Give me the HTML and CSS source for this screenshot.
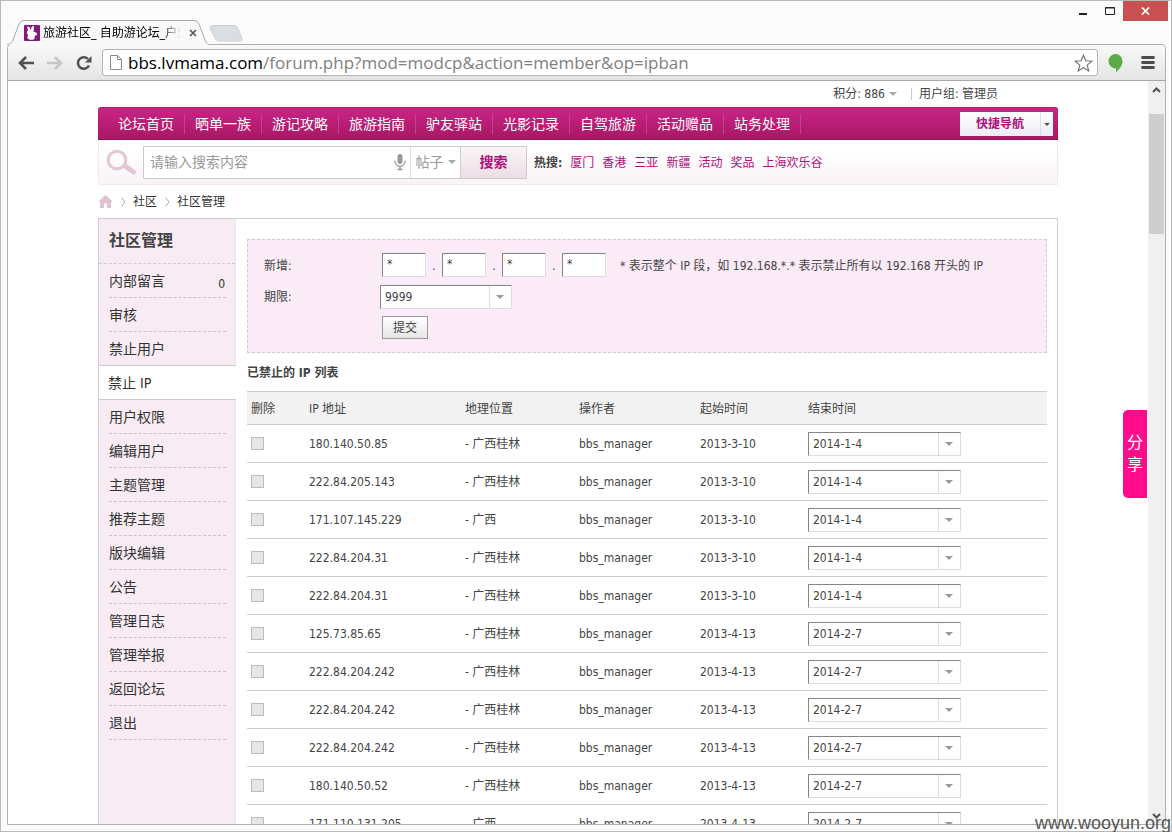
FILE: index.html
```html
<!DOCTYPE html>
<html lang="zh-cn">

<head>
    <meta charset="UTF-8">
    <meta name="viewport" content="width=device-width, initial-scale=1.0">
    <title>旅游社区_ 自助游论坛_户外</title>
    <link rel="stylesheet" href="styles.css">
</head>

<body>
    <div class="window">
        <!-- 标题栏 -->
        <div class="titlebar">
            <div class="tab">
                <svg class="tab-bg" width="202" height="25" viewBox="0 0 202 25">
                    <path d="M0 24.5 C5 24 5 22 6 20 L12 4 Q13.5 .5 17 .5 H187 Q190.500 .5 192 4 L198 20 Q199.500 24.500 202 24.500" fill="#f9f9f9" stroke="#a9a9a9" />
                    <path d="M2 25h199" stroke="#f9f9f9" stroke-width="2" />
                </svg>
                <svg class="favicon" width="16" height="16" viewBox="0 0 16 16">
                    <rect width="16" height="16" rx="1" fill="#86177c" />
                    <path d="M4 1.500c1.500 0 2.500 2 3 4.500C7 3.500 7.500 1 9 1c1.500 0 1 3 .5 5.500 1 1 3 .5 3.500 2 .4 1.500-1 1.500-2 2.500s.5 3-1.500 3.500c-2 .5-5 .5-6-1.500-.7-1.500 1-2 .5-3S2.500 8 3 6.500c.5-1 1.500 0 1.500 0C4 5 2.500 1.500 4 1.500z" fill="#fff" />
                </svg>
                <span class="tab-title">旅游社区_ 自助游论坛_户外</span>
                <svg class="tab-close" width="8" height="8" viewBox="0 0 8 8"><path d="M1 1l6 6M7 1L1 7" stroke="#555" stroke-width="1.600" /></svg>
            </div>
            <svg class="newtab" width="34" height="17" viewBox="0 0 34 17"><path d="M3 .5h22q3 0 4 3l4 10q.5 2.500-2 2.500H10q-3 0-4-3L1 3Q.5.5 3 .5z" fill="#d9dee5" stroke="#cdd1d6" /></svg>
            <div class="win-btns">
                <svg width="50" height="20" viewBox="0 0 50 20">
                    <path d="M6 13h8" stroke="#222" stroke-width="2" />
                    <path d="M32.500 6.500h9v7h-9z M32 7h10" fill="none" stroke="#222" />
                </svg>
                <button class="close" aria-label="关闭"><svg width="9" height="8" viewBox="0 0 9 8"><path d="M1 .5l7 7M8 .5l-7 7" stroke="#fff" stroke-width="1.700" /></svg></button>
            </div>
        </div>

        <div class="frame">
            <!-- 地址栏 -->
            <div class="toolbar">
                <svg width="16" height="14" viewBox="0 0 16 14"><path d="M8 1L2 7l6 6M2 7h14" fill="none" stroke="#505050" stroke-width="2.500" /></svg>
                <svg width="16" height="14" viewBox="0 0 16 14"><path d="M8 1l6 6-6 6M14 7H0" fill="none" stroke="#c6c6c6" stroke-width="2.500" /></svg>
                <svg width="16" height="16" viewBox="0 0 16 16"><path d="M13 10.500A5.800 5.800 0 1 1 12 4" fill="none" stroke="#505050" stroke-width="2.500" /><path d="M15.500 1v6.500H9z" fill="#505050" /></svg>
                <div class="omnibox">
                    <svg width="12" height="15" viewBox="0 0 12 15"><path d="M.5.5h7l4 4v10H.5z M7.500.5v4h4" fill="#fff" stroke="#8a8a8a" /></svg>
                    <span class="url"><b>bbs.lvmama.com</b>/forum.php?mod=modcp&amp;action=member&amp;op=ipban</span>
                    <svg width="19" height="18" viewBox="0 0 19 18"><path d="M9.500 1.200l2.300 5.600 6 .4-4.600 3.900 1.500 5.800-5.200-3.200-5.200 3.200 1.500-5.800L1.200 7.200l6-.4z" fill="#fff" stroke="#777" stroke-width="1.200" /></svg>
                </div>
                <svg width="15" height="18" viewBox="0 0 15 18"><path d="M7.500 0a7 7 0 0 1 7 7.300c0 4-3 8-6.500 10.700v-3.600A7 7 0 1 1 7.500 0z" fill="#5aaa46" /></svg>
                <svg class="menu" width="14" height="13" viewBox="0 0 14 13"><path d="M1.500 1.500h11M1.500 6.500h11M1.500 11.500h11" stroke="#4c4c4c" stroke-width="2.800" stroke-linecap="round" /></svg>
            </div>

            <div class="viewport">
                <div class="page">
                    <div class="wp">
                        <div class="userbar">
                            <a href="#">积分: 886<i class="arrow"></i></a>
                            <a href="#" class="group">用户组: 管理员</a>
                        </div>

                        <div class="nav">
                            <ul>
                                <li><a href="#">论坛首页</a></li>
                                <li><a href="#">晒单一族</a></li>
                                <li><a href="#">游记攻略</a></li>
                                <li><a href="#">旅游指南</a></li>
                                <li><a href="#">驴友驿站</a></li>
                                <li><a href="#">光影记录</a></li>
                                <li><a href="#">自驾旅游</a></li>
                                <li><a href="#">活动赠品</a></li>
                                <li><a href="#">站务处理</a></li>
                            </ul>
                            <button class="quick"><span>快捷导航</span><i class="arrow"></i></button>
                        </div>

                        <form class="search">
                            <svg width="30" height="26" viewBox="0 0 30 26"><circle cx="10" cy="11" r="8.800" fill="none" stroke="#e3c6d4" stroke-width="3" /><path d="M18 17l8.500 6" stroke="#e3c6d4" stroke-width="5" stroke-linecap="round" /></svg>
                            <div class="search-box">
                                <input type="text" placeholder="请输入搜索内容" aria-label="搜索内容">
                                <svg width="12" height="17" viewBox="0 0 12 17"><rect x="3.500" y="0" width="5" height="10" rx="2.500" fill="#999" /><path d="M1 6.500c0 7.500 10 7.500 10 0M6 12v3M3.500 15.500h5" fill="none" stroke="#999" stroke-width="1.300" /></svg>
                                <button type="button" class="type">帖子<i class="arrow"></i></button>
                                <button type="button" class="go">搜索</button>
                            </div>
                            <div class="hot">
                                <strong>热搜:</strong>
                                <a href="#">厦门</a><a href="#">香港</a><a href="#">三亚</a><a href="#">新疆</a><a href="#">活动</a><a href="#">奖品</a><a href="#">上海欢乐谷</a>
                            </div>
                        </form>

                        <div class="crumb">
                            <svg width="15" height="13" viewBox="0 0 15 13"><path d="M7.500 0L15 6.800h-2V13H9V8.500H6V13H2V6.800H0z" fill="#e0c3d3" /></svg>
                            <svg width="5" height="10" viewBox="0 0 5 10"><path d="M.5.5L4 5 .5 9.500" fill="none" stroke="#aaa" /></svg>
                            <a href="#">社区</a>
                            <svg width="5" height="10" viewBox="0 0 5 10"><path d="M.5.5L4 5 .5 9.500" fill="none" stroke="#aaa" /></svg>
                            <a href="#">社区管理</a>
                        </div>

                        <div class="main">
                            <div class="side">
                                <h2>社区管理</h2>
                                <ul>
                                    <li><a href="#">内部留言</a><em>0</em></li>
                                    <li><a href="#">审核</a></li>
                                    <li><a href="#">禁止用户</a></li>
                                    <li class="active"><a href="#">禁止 IP</a></li>
                                    <li><a href="#">用户权限</a></li>
                                    <li><a href="#">编辑用户</a></li>
                                    <li><a href="#">主题管理</a></li>
                                    <li><a href="#">推荐主题</a></li>
                                    <li><a href="#">版块编辑</a></li>
                                    <li><a href="#">公告</a></li>
                                    <li><a href="#">管理日志</a></li>
                                    <li><a href="#">管理举报</a></li>
                                    <li><a href="#">返回论坛</a></li>
                                    <li><a href="#">退出</a></li>
                                </ul>
                            </div>

                            <div class="content">
                                <form class="ban">
                                    <div class="row">
                                        <label for="ip1">新增:</label>
                                        <div class="ips">
                                            <input type="text" id="ip1" value="*"><span>.</span>
                                            <input type="text" aria-label="IP 2" value="*"><span>.</span>
                                            <input type="text" aria-label="IP 3" value="*"><span>.</span>
                                            <input type="text" aria-label="IP 4" value="*">
                                        </div>
                                        <p>* 表示整个 IP 段，如 192.168.*.* 表示禁止所有以 192.168 开头的 IP</p>
                                    </div>
                                    <div class="row">
                                        <label for="term">期限:</label>
                                        <span class="select term"><select id="term"><option>9999</option></select></span>
                                    </div>
                                    <div class="row">
                                        <button type="button" class="submit">提交</button>
                                    </div>
                                </form>

                                <h3>已禁止的 IP 列表</h3>
                                <table>
                                    <thead>
                                        <tr>
                                            <th class="c-del">删除</th>
                                            <th class="c-ip">IP 地址</th>
                                            <th class="c-geo">地理位置</th>
                                            <th class="c-op">操作者</th>
                                            <th class="c-start">起始时间</th>
                                            <th>结束时间</th>
                                        </tr>
                                    </thead>
                                    <tbody id="list"></tbody>
                                </table>
                            </div>
                        </div>
                    </div>
                    <a href="#" class="share">分<br>享</a>
                </div>

                <div class="scrollbar">
                    <svg width="9" height="6" viewBox="0 0 9 6"><path d="M1 5l3.500-3.500L8 5" fill="none" stroke="#505050" stroke-width="2" /></svg>
                    <div class="track"><div class="thumb"></div></div>
                    <svg width="9" height="6" viewBox="0 0 9 6"><path d="M1 1l3.500 3.500L8 1" fill="none" stroke="#505050" stroke-width="2" /></svg>
                </div>
            </div>
        </div>
        <div class="mark">www.wooyun.org</div>
    </div>
    <script>
        var list = document.querySelector('#list')
        // IP, 地理位置, 起始时间, 结束时间
        var data = [
            ['180.140.50.85', '广西桂林', '2013-3-10', '2014-1-4'],
            ['222.84.205.143', '广西桂林', '2013-3-10', '2014-1-4'],
            ['171.107.145.229', '广西', '2013-3-10', '2014-1-4'],
            ['222.84.204.31', '广西桂林', '2013-3-10', '2014-1-4'],
            ['222.84.204.31', '广西桂林', '2013-3-10', '2014-1-4'],
            ['125.73.85.65', '广西桂林', '2013-4-13', '2014-2-7'],
            ['222.84.204.242', '广西桂林', '2013-4-13', '2014-2-7'],
            ['222.84.204.242', '广西桂林', '2013-4-13', '2014-2-7'],
            ['222.84.204.242', '广西桂林', '2013-4-13', '2014-2-7'],
            ['180.140.50.52', '广西桂林', '2013-4-13', '2014-2-7'],
            ['171.110.131.205', '广西', '2013-4-13', '2014-2-7']
        ]
        var html = ''
        for (var i = 0; i < data.length; i++) {
            html += '<tr>' +
                '<td><input type="checkbox" disabled aria-label="删除 ' + data[i][0] + '"></td>' +
                '<td>' + data[i][0] + '</td>' +
                '<td>- ' + data[i][1] + '</td>' +
                '<td>bbs_manager</td>' +
                '<td>' + data[i][2] + '</td>' +
                '<td><span class="select"><select aria-label="结束时间"><option>' + data[i][3] + '</option></select></span></td>' +
                '</tr>'
        }
        list.innerHTML = html
    </script>
</body>

</html>
```
FILE: styles.css
```css
* {
    list-style: none;
    margin: 0;
    padding: 0;
    box-sizing: border-box;
}

body {
    overflow: hidden;
    font: 12px/18px "DejaVu Sans Condensed", "Noto Sans CJK SC", sans-serif;
    color: #444;
}

a {
    color: inherit;
    text-decoration: none;
}

button,
input,
select {
    font: inherit;
    color: inherit;
    border-radius: 0;
}

svg {
    display: block;
    flex: none;
}

.arrow {
    display: inline-block;
    border: 4px solid transparent;
    border-top-color: #aaa;
    border-bottom: 0;
}

/* 浏览器窗口 */
.window {
    position: relative;
    display: flex;
    flex-direction: column;
    height: 100vh;
    padding: 0 5px 6px 6px;
    border: 1px solid #b9b9b9;
    background-color: #fbfbfb;
}

.titlebar {
    display: flex;
    height: 43px;
}

.tab {
    position: relative;
    display: flex;
    align-items: center;
    width: 202px;
    height: 25px;
    margin-top: 19px;
    padding-left: 17px;
    z-index: 1;
}

.tab-bg {
    position: absolute;
    left: 0;
    top: 0;
}

.favicon,
.tab-close {
    position: relative;
}

.tab-title {
    position: relative;
    width: 138px;
    margin: 0 8px 0 3px;
    overflow: hidden;
    white-space: nowrap;
    color: #000;
    -webkit-mask-image: linear-gradient(to right, #000 120px, transparent 138px);
    mask-image: linear-gradient(to right, #000 120px, transparent 138px);
}

.newtab {
    margin-top: 24px;
}

.win-btns {
    display: flex;
    margin-left: auto;
    margin-right: -2px;
}

.close {
    display: flex;
    align-items: center;
    justify-content: center;
    width: 45px;
    height: 20px;
    border: 0;
    background-color: #c75050;
}

.frame {
    flex: 1;
    display: flex;
    flex-direction: column;
    min-height: 0;
    border: 1px solid #b0b0b0;
    border-radius: 4px 4px 0 0;
    background-color: #fff;
}

.toolbar {
    display: flex;
    align-items: center;
    gap: 13px;
    height: 36px;
    padding: 0 10px;
    border-bottom: 1px solid #a8a8a8;
    border-radius: 4px 4px 0 0;
    background-image: linear-gradient(#f9f9f9, #e4e4e4);
}

.omnibox {
    flex: 1;
    display: flex;
    align-items: center;
    height: 27px;
    margin: 0 -3px;
    padding: 0 4px 0 7px;
    border: 1px solid #b3b3b3;
    border-radius: 3px;
    background-color: #fff;
}

.url {
    flex: 1;
    margin-left: 6px;
    font: 17px/24px "Open Sans", sans-serif;
    color: #808080;
}

.url b {
    font-weight: normal;
    color: #000;
}

.menu {
    margin-left: 5px;
}

.viewport {
    flex: 1;
    display: flex;
    min-height: 0;
}

.page {
    position: relative;
    flex: 1;
    overflow: hidden;
}

.scrollbar {
    display: flex;
    flex-direction: column;
    align-items: center;
    width: 17px;
    padding: 6px 0 5px;
    background-color: #f0f0f0;
}

.track {
    flex: 1;
    width: 15px;
    padding-top: 21px;
}

.thumb {
    height: 120px;
    background-color: #cdcdcd;
}

.share {
    position: absolute;
    right: 1px;
    top: 329px;
    width: 24px;
    height: 88px;
    padding-top: 22px;
    border-radius: 5px 0 0 5px;
    background-color: #ff0b8c;
    color: #fff;
    font-size: 16px;
    line-height: 22px;
    text-align: center;
}

/* 论坛页面 */
.wp {
    width: 960px;
    margin: 0 auto;
}

.userbar {
    display: flex;
    justify-content: flex-end;
    height: 26px;
    padding-right: 60px;
    line-height: 26px;
}

.userbar .arrow {
    margin: 0 14px 2px 4px;
}

.userbar .group {
    padding-left: 8px;
    background: linear-gradient(#ccc, #ccc) no-repeat 0 7px / 1px 12px;
}

.nav {
    display: flex;
    justify-content: space-between;
    height: 33px;
    padding: 0 5px 0 10px;
    border-top: 1px solid #a81c6c;
    border-bottom: 1px solid #8e1458;
    border-radius: 3px 3px 0 0;
    background-image: linear-gradient(#c92486, #a91864);
}

.nav ul {
    display: flex;
    align-items: center;
}

.nav li {
    padding: 0 10px;
    border-right: 1px solid #c1458c;
    color: #fff;
    font-size: 14px;
    line-height: 20px;
}

.quick {
    display: flex;
    align-items: center;
    height: 24px;
    margin-top: 4px;
    border: 0;
    background-image: linear-gradient(#fff, #ecebf5);
    color: #b0107a;
    font-weight: bold;
    line-height: 24px;
}

.quick span {
    width: 81px;
    border-right: 1px solid #ddd;
}

.quick .arrow {
    margin: 0 3px;
    border-width: 3px;
    border-bottom: 0;
    border-top-color: #555;
}

.search {
    display: flex;
    align-items: center;
    height: 45px;
    padding-left: 8px;
    border: 1px solid #f4e8ef;
    border-top: 0;
    background-image: linear-gradient(#fff 20%, #faf3f7);
}

.search-box {
    display: flex;
    align-items: center;
    width: 384px;
    height: 33px;
    margin: 0 7px 0 6px;
    border: 1px solid #ccc;
    background-color: #fff;
    font-size: 14px;
}

.search-box input {
    flex: 1;
    min-width: 0;
    padding-left: 6px;
    border: 0;
    outline: none;
}

.search-box input::placeholder {
    color: #999;
}

.type {
    width: 50px;
    height: 31px;
    margin-left: 4px;
    border: 0;
    border-left: 1px solid #ddd;
    background-color: #fff;
    color: #999;
}

.type .arrow {
    margin: 0 0 3px 4px;
}

.go {
    width: 66px;
    height: 31px;
    border: 0;
    border-left: 1px solid #ccc;
    background-image: linear-gradient(#fbf5f8, #ecdde5);
    color: #b0107a;
    font-weight: bold;
}

.hot {
    display: flex;
    gap: 8px;
    padding-top: 2px;
    color: #b0107a;
}

.hot strong {
    color: #444;
}

.crumb {
    display: flex;
    align-items: center;
    height: 33px;
    color: #333;
}

.crumb svg + svg,
.crumb a + svg {
    margin: 0 7px 0 8px;
}

.main {
    display: flex;
    border: 1px solid #cdcdcd;
}

.side {
    width: 137px;
    background-color: #f8ebf3;
    border-right: 1px solid #f2e4ec;
}

.side h2 {
    height: 45px;
    padding-left: 10px;
    border-bottom: 1px dashed #cdcdcd;
    font-size: 16px;
    line-height: 44px;
}

.side li {
    display: flex;
    justify-content: space-between;
    height: 34px;
    margin: 0 9px 0 10px;
    border-bottom: 1px dashed #cdbfc8;
    color: #333;
    font-size: 14px;
    line-height: 34px;
}

.side li em {
    padding: 3px 1px 0 0;
    font-size: 12px;
    font-style: normal;
}

.side li.active {
    height: 35px;
    margin: -1px -1px 0 0;
    padding-left: 9px;
    border-top: 1px solid #cdcdcd;
    border-bottom: 1px solid #cdcdcd;
    background-color: #fff;
}

.content {
    flex: 1;
    padding: 20px 10px 0 11px;
}

.ban {
    padding: 10px 16px 9px;
    border: 1px dashed #cdcdcd;
    background-color: #faebf7;
}

.row {
    display: flex;
    align-items: center;
    height: 31px;
}

.row label {
    width: 116px;
}

.ips {
    display: flex;
    margin: 0 14px 0 2px;
}

.ips input {
    width: 44px;
    height: 24px;
    padding: 0 4px 2px;
}

.ips span {
    width: 16px;
    line-height: 26px;
    text-align: center;
}

.ips input,
.select select {
    border: 1px solid;
    border-color: #848484 #ddd #ddd #848484;
    background-color: #fff;
}

.select {
    position: relative;
    display: block;
    width: 153px;
    height: 24px;
}

.select.term {
    width: 132px;
}

.select select {
    width: 100%;
    height: 24px;
    padding: 0 4px;
    appearance: none;
    -webkit-appearance: none;
    background-image: linear-gradient(#ddd, #ddd);
    background-repeat: no-repeat;
    background-position: right 21px top;
    background-size: 1px 100%;
}

.select::after {
    content: "";
    position: absolute;
    right: 8px;
    top: 10px;
    border: 4px solid transparent;
    border-top-color: #999;
    border-bottom: 0;
    pointer-events: none;
}

.submit {
    width: 46px;
    height: 23px;
    margin-left: 118px;
    border: 1px solid #999;
    background-image: linear-gradient(#fff, #e6e6e6);
}

h3 {
    height: 38px;
    font-size: 12px;
    line-height: 40px;
}

table {
    width: 100%;
    table-layout: fixed;
    border-collapse: collapse;
}

th,
td {
    height: 38px;
    padding: 0 0 0 4px;
    border-bottom: 1px solid #cdcdcd;
    text-align: left;
    font-weight: normal;
    vertical-align: middle;
}

th {
    height: 33px;
    padding-top: 2px;
    border-top: 1px solid #cdcdcd;
    background-color: #f2f2f2;
}

.c-del {
    width: 58px;
}

.c-ip {
    width: 156px;
}

.c-geo {
    width: 114px;
}

.c-op {
    width: 121px;
}

.c-start {
    width: 108px;
}

td input {
    display: block;
    width: 13px;
    height: 13px;
    appearance: none;
    -webkit-appearance: none;
    border: 1px solid #bcbcbc;
    background-color: #e6e6e6;
}

.mark {
    position: absolute;
    right: 0;
    bottom: -2px;
    color: #555;
    font: 18px/20px "Liberation Sans", sans-serif;
}
```
